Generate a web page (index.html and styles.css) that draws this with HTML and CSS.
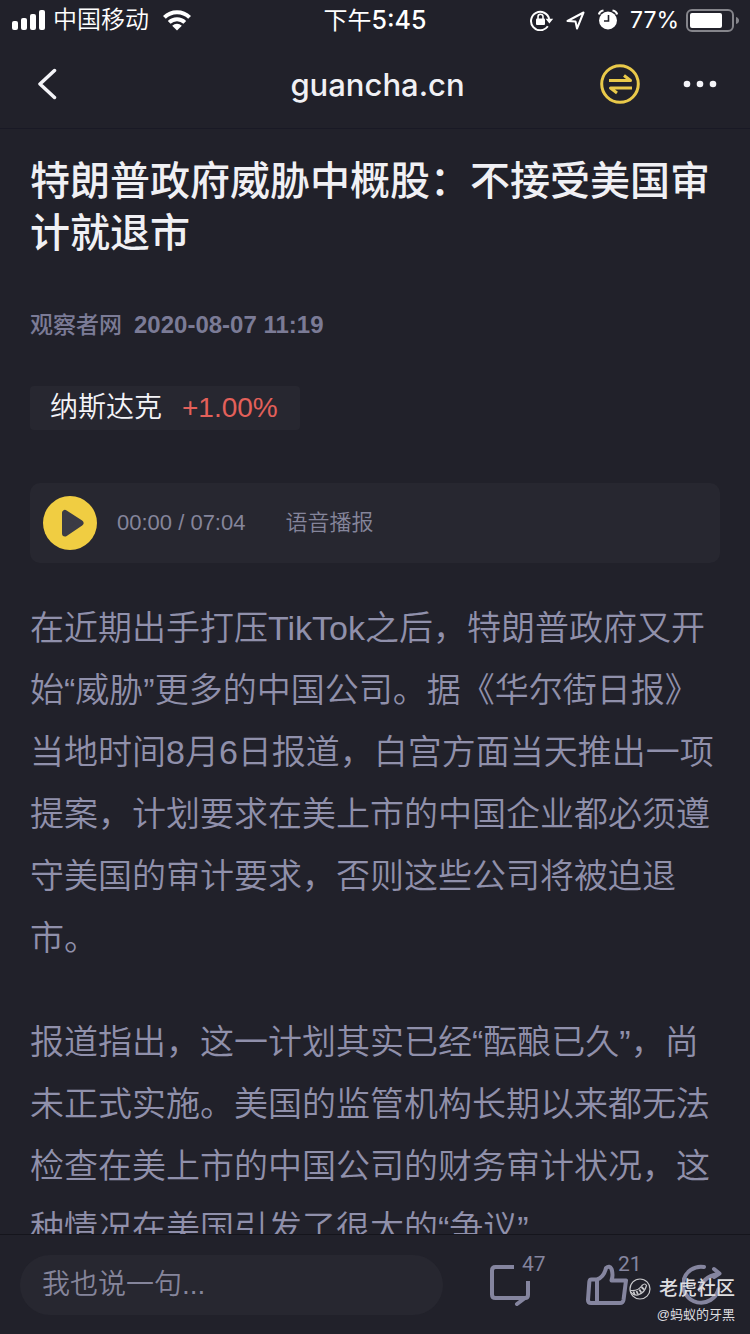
FILE: index.html
```html
<!DOCTYPE html>
<html lang="zh-CN">
<head>
<meta charset="utf-8">
<meta name="viewport" content="width=device-width">
<title>guancha.cn</title>
<link rel="stylesheet" href="styles.css">
</head>
<body>
<div class="app">
  <div class="status">
    <div class="status-left">
      <svg width="34" height="22" viewBox="0 0 34 22" fill="#fff" aria-hidden="true">
        <rect x="0" y="12" width="6" height="9" rx="2"/><rect x="9" y="9" width="6" height="12" rx="2"/><rect x="18" y="5" width="6" height="16" rx="2"/><rect x="27" y="1" width="6" height="20" rx="2"/>
      </svg>
      <span class="carrier">中国移动</span>
      <svg class="wifi" width="30" height="22" viewBox="0 0 30 22" fill="none" stroke="#fff" stroke-width="4" aria-hidden="true">
        <path d="M2.400 8.400a18 18 0 0 1 25.200 0"/><path d="M7.200 13.400a11.300 11.300 0 0 1 15.600 0"/><path d="M15 21.500l-4.800-4.800a7 7 0 0 1 9.600 0z" fill="#fff" stroke="none"/>
      </svg>
    </div>
    <div class="clock">下午<span class="digits">5:45</span></div>
    <div class="status-right">
      <svg width="24" height="22" viewBox="0 0 24 22" aria-hidden="true">
        <path d="M17.800 17.300A9.200 9.200 0 1 1 19.200 10" fill="none" stroke="#fff" stroke-width="2"/>
        <path d="M15.600 9.800h7.600l-3.800 4.600z" fill="#fff"/>
        <rect x="6" y="9.500" width="9" height="6.500" rx="1" fill="#fff"/>
        <path d="M8 10V7.700a2.500 2.500 0 0 1 5 0V10" fill="none" stroke="#fff" stroke-width="1.600"/>
      </svg>
      <svg width="20" height="22" viewBox="0 0 20 22" fill="none" stroke="#fff" stroke-width="2" stroke-linejoin="round" aria-hidden="true"><path d="M1.500 12L17.500 3.500 11 19.500 9.500 12.500z"/></svg>
      <svg width="20" height="22" viewBox="0 0 20 22" aria-hidden="true">
        <circle cx="10" cy="11.500" r="9" fill="#fff"/>
        <path d="M1 5.500Q1.500 2 5.500 1.500M19 5.500Q18.500 2 14.500 1.500" fill="none" stroke="#fff" stroke-width="2.200"/>
        <path d="M10.500 6v6H6" fill="none" stroke="#21212a" stroke-width="1.600"/>
      </svg>
      <span class="percent">77%</span>
      <svg class="battery" width="54" height="24" viewBox="0 0 54 24" aria-hidden="true">
        <rect x="1" y="2" width="46" height="21" rx="5" fill="none" stroke="#85858b" stroke-width="2"/>
        <rect x="4" y="5" width="32" height="15" rx="2" fill="#fff"/>
        <path d="M50 9q3 1 3 3.500T50 16z" fill="#85858b"/>
      </svg>
    </div>
  </div>

  <header class="nav">
    <button class="icon-btn back" type="button" aria-label="返回">
      <svg width="20" height="32" viewBox="0 0 20 32" fill="none" stroke="#f4f4f8" stroke-width="3.500" stroke-linecap="round" stroke-linejoin="round"><path d="M16.500 2.500L2 16l14.500 13.500"/></svg>
    </button>
    <div class="site">guancha.cn</div>
    <div class="nav-actions">
      <button class="icon-btn" type="button" aria-label="交易">
        <svg width="40" height="40" viewBox="0 0 40 40" fill="none" stroke="#e9c94a" stroke-width="3"><circle cx="20" cy="20" r="18.300"/><path d="M9 16.500H30.500L24 11.500M32 24H10.500L17 29" stroke-linejoin="round"/></svg>
      </button>
      <button class="icon-btn" type="button" aria-label="更多">
        <svg width="34" height="8" viewBox="0 0 34 8" fill="#f4f4f8"><circle cx="4" cy="4" r="3.300"/><circle cx="17" cy="4" r="3.300"/><circle cx="30" cy="4" r="3.300"/></svg>
      </button>
    </div>
  </header>

  <main class="article">
    <h1 class="title">特朗普政府威胁中概股：不接受美国审计就退市</h1>
    <div class="meta"><span class="source">观察者网</span><time datetime="2020-08-07T11:19">2020-08-07 11:19</time></div>
    <a class="quote" href="#"><span>纳斯达克</span><span class="change">+1.00%</span></a>
    <section class="player">
      <button class="icon-btn" type="button" aria-label="播放">
        <svg width="54" height="54" viewBox="0 0 54 54"><circle cx="27" cy="27" r="27" fill="#f0cd42"/><path d="M22 17v20.500L37.500 27z" fill="#3b3b45" stroke="#3b3b45" stroke-width="6" stroke-linejoin="round"/></svg>
      </button>
      <span>00:00 / 07:04</span>
      <span class="player-label">语音播报</span>
    </section>
    <p class="para">在近期出手打压TikTok之后，特朗普政府又开始“威胁”更多的中国公司。据《华尔街日报》当地时间8月6日报道，白宫方面当天推出一项提案，计划要求在美上市的中国企业都必须遵守美国的审计要求，否则这些公司将被迫退市。</p>
    <p class="para">报道指出，这一计划其实已经“酝酿已久”，尚未正式实施。美国的监管机构长期以来都无法检查在美上市的中国公司的财务审计状况，这种情况在美国引发了很大的“争议”</p>
  </main>

  <footer class="bar">
    <input class="reply" type="text" placeholder="我也说一句..." aria-label="我也说一句">
    <button class="icon-btn action" type="button" aria-label="评论">
      <svg width="42" height="42" viewBox="0 0 42 42" fill="none" stroke="#85859f" stroke-width="4"><path d="M24 3H5.500Q2 3 2 6.500V30.500Q2 34 5.500 34H35Q38 34 38 31V17"/><path d="M35 34L27 40" stroke-linecap="round"/></svg>
      <span class="count">47</span>
    </button>
    <button class="icon-btn action" type="button" aria-label="点赞">
      <svg width="42" height="42" viewBox="0 0 42 42" fill="none" stroke="#85859f" stroke-width="4" stroke-linejoin="round"><path d="M11 15.500H5.500Q3.500 15.500 3.300 18L2 36Q2 39 5 39H34Q37 39 37.500 36L40 16.500H25.500Q27.500 11 25.500 5 23.500 1 20 4 18 13 11 15.500V39"/></svg>
      <span class="count">21</span>
    </button>
    <button class="icon-btn action" type="button" aria-label="分享">
      <svg width="40" height="42" viewBox="0 0 40 42" fill="none" stroke="#85859f" stroke-width="4" stroke-linecap="round"><path d="M22 3A18 18 0 1 0 36.500 25"/><path d="M18 26Q20 13 36 10M32 5L37.500 9.500 32 13" stroke-linejoin="round"/></svg>
    </button>
    <div class="watermark">
      <div class="mark-brand">
        <svg width="22" height="22" viewBox="0 0 22 22" fill="none" stroke="#c9c9cc" stroke-width="1.200" aria-hidden="true"><circle cx="11" cy="11" r="10"/><path d="M1.500 12.500Q9 13.500 13 7.500 16 4.500 17.500 7.500 16 14.500 9 17 4 17.500 2 14"/><path d="M4.500 13.500l1.200 3.500M7.500 13l1.500 3.500M10.300 11.500l2 3M12.500 9l2.500 2.500" stroke-width="1.800"/></svg>
        <span>老虎社区</span>
      </div>
      <div class="mark-user">@蚂蚁的牙黑</div>
    </div>
  </footer>
</div>
</body>
</html>
```

FILE: styles.css
```css
* { box-sizing: border-box; }

body {
  margin: 0;
  background: #21212a;
  color: #f0f0f4;
  font-family: "Liberation Sans", "Noto Sans CJK SC", sans-serif;
}

.app {
  display: flex;
  flex-direction: column;
  height: 100vh;
}

.icon-btn {
  display: flex;
  padding: 0;
  border: 0;
  background: none;
  color: inherit;
  font: inherit;
}

.status,
.nav {
  display: grid;
  grid-template-columns: 1fr auto 1fr;
  align-items: center;
  flex: none;
}

.status {
  height: 40px;
  padding: 0 12px;
  color: #fff;
  font-size: 24px;
  line-height: 24px;
  font-family: Inter, "Noto Sans CJK SC", sans-serif;
}

.status-left,
.status-right {
  display: flex;
  align-items: center;
}

.carrier { margin-left: 7px; font-weight: 350; }
.wifi { margin-left: 13px; }
.clock { font-weight: 400; }

.digits {
  font-size: 25px;
  font-weight: 500;
}

.percent { font-size: 23px; }

.status-right {
  justify-content: flex-end;
  gap: 12px;
}

.battery { margin: 0 -2px 0 -5px; }

.nav {
  height: 89px;
  padding: 0 33px 0 38px;
  border-bottom: 1px solid #191925;
}

.site {
  font-family: Inter, sans-serif;
  font-size: 31px;
  font-weight: 500;
}

.nav-actions {
  display: flex;
  justify-content: flex-end;
  align-items: center;
  gap: 43px;
}

.article {
  flex: 1;
  min-height: 0;
  overflow: hidden;
  padding: 26px 30px 0;
}

.title {
  margin: 0;
  font-size: 40px;
  line-height: 52px;
  font-weight: 500;
}

.meta {
  display: flex;
  gap: 12px;
  margin-top: 50px;
  color: #7b7b96;
  font-size: 24px;
  line-height: 32px;
}

.source {
  font-size: 23px;
  font-weight: 500;
}

.meta time { font-weight: 700; }

.quote {
  display: flex;
  gap: 20px;
  width: fit-content;
  margin-top: 45px;
  padding: 0 22px 0 20px;
  border-radius: 4px;
  background: #272730;
  color: #f4f4f8;
  font-size: 28px;
  line-height: 44px;
  font-weight: 350;
  text-decoration: none;
}

.change { color: #e3605a; }

.player {
  display: flex;
  align-items: center;
  gap: 20px;
  height: 80px;
  margin-top: 53px;
  padding: 0 13px;
  border-radius: 10px;
  background: #272730;
  color: #85859b;
  font-size: 22px;
  line-height: 32px;
  font-weight: 350;
}

.player-label { margin-left: 20px; }

.para {
  margin: 34px 0 42px;
  color: #9090ab;
  font-size: 34px;
  line-height: 62px;
  font-weight: 350;
}

.para + .para { margin-top: 0; }

.bar {
  position: relative;
  display: flex;
  align-items: center;
  gap: 54px;
  flex: none;
  height: 100px;
  padding: 0 28px 0 20px;
  border-top: 1px solid #15151c;
}

.reply {
  flex: 1;
  min-width: 0;
  height: 60px;
  margin-right: -7px;
  padding: 0 22px;
  border: 0;
  border-radius: 30px;
  background: #272730;
  color: #f0f0f4;
  font-family: "Liberation Sans", "Noto Sans CJK SC", sans-serif;
  font-size: 28px;
  font-weight: 350;
}

.reply::placeholder { color: #85859b; opacity: 1; }

.action { position: relative; }

.count {
  position: absolute;
  left: 32px;
  top: -12px;
  color: #85859f;
  font-family: Roboto, sans-serif;
  font-size: 21px;
  line-height: 24px;
}

.watermark {
  position: absolute;
  right: 15px;
  bottom: 8px;
  color: #dedee0;
  text-align: right;
  pointer-events: none;
}

.mark-brand {
  display: flex;
  align-items: center;
  gap: 8px;
  font-size: 19px;
  line-height: 30px;
  font-weight: 500;
}

.mark-user {
  font-size: 13px;
  line-height: 22px;
}
```
